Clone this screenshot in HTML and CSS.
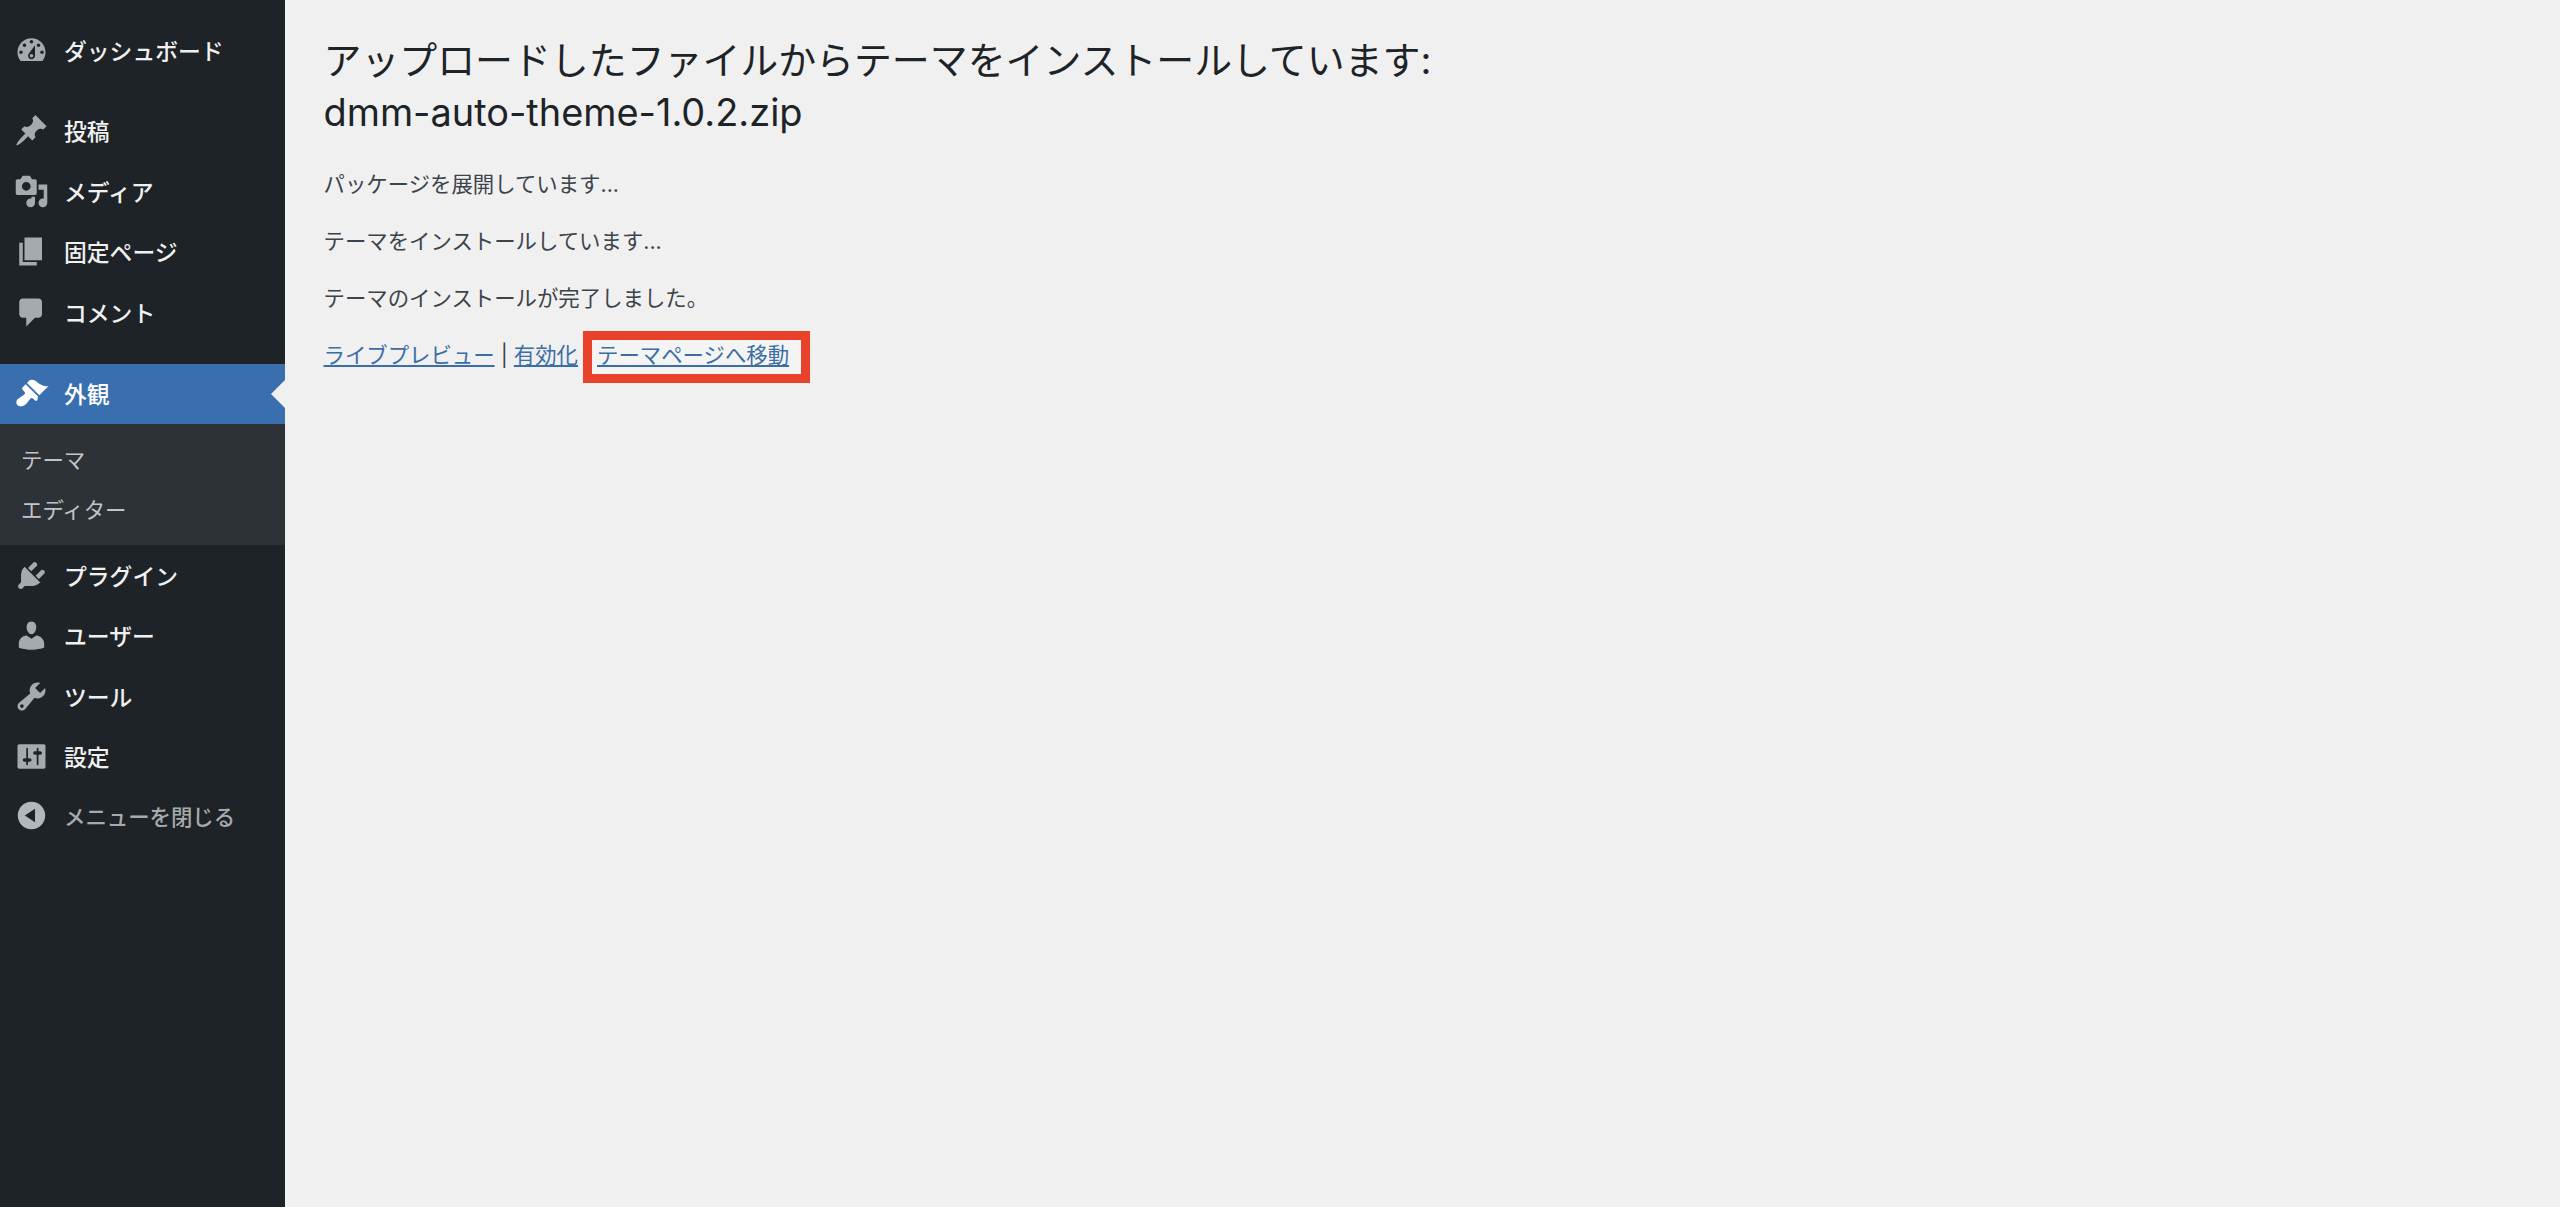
FILE: index.html
```html
<!DOCTYPE html>
<html lang="ja">
<head>
    <meta charset="UTF-8">
    <title>テーマをインストール</title>
    <link rel="stylesheet" href="styles.css">
</head>
<body>
    <nav id="sidebar">
        <ul class="menu menu-top">
            <li class="menu-item">
                <svg class="icon" viewBox="0 0 20 20"><path fill-rule="evenodd" d="M3.76 16h12.48c1.1-1.37 1.76-3.11 1.76-5 0-4.42-3.58-8-8-8s-8 3.58-8 8c0 1.89.66 3.63 1.76 5zM10 4c.55 0 1 .45 1 1s-.45 1-1 1-1-.45-1-1 .45-1 1-1zM6 6c.55 0 1 .45 1 1s-.45 1-1 1-1-.45-1-1 .45-1 1-1zm8 0c.55 0 1 .45 1 1s-.45 1-1 1-1-.45-1-1 .45-1 1-1zm-5.37 5.55L12 7v6c0 1.1-.9 2-2 2s-2-.9-2-2c0-.57.24-1.08.63-1.45zM4 10c.55 0 1 .45 1 1s-.45 1-1 1-1-.45-1-1 .45-1 1-1zm12 0c.55 0 1 .45 1 1s-.45 1-1 1-1-.45-1-1 .45-1 1-1zm-5 3c0-.55-.45-1-1-1s-1 .45-1 1 .45 1 1 1 1-.45 1-1z"/></svg>
                <span>ダッシュボード</span>
            </li>
        </ul>
        <ul class="menu menu-content">
            <li class="menu-item">
                <svg class="icon" viewBox="0 0 20 20"><path d="M10.44 3.02l1.82-1.82 6.36 6.35-1.83 1.82c-1.05-.68-2.48-.57-3.41.36l-.75.75c-.92.93-1.04 2.35-.35 3.41l-1.83 1.82-2.41-2.41-2.8 2.79c-.42.42-3.38 2.71-3.8 2.29s1.86-3.39 2.28-3.81l2.79-2.79L4.1 9.36l1.83-1.82c1.05.69 2.48.57 3.4-.36l.75-.75c.93-.92 1.05-2.35.36-3.41z"/></svg>
                <span>投稿</span>
            </li>
            <li class="menu-item">
                <svg class="icon" viewBox="0 0 20 20"><path fill-rule="evenodd" d="M13 11V4c0-.55-.45-1-1-1h-1.67L9 1H5L3.67 3H2c-.55 0-1 .45-1 1v7c0 .55.45 1 1 1h10c.55 0 1-.45 1-1zM7 4.5c1.38 0 2.5 1.12 2.5 2.5S8.38 9.5 7 9.5 4.5 8.38 4.5 7 5.62 4.5 7 4.5zM14 6h5v10.5c0 1.38-1.12 2.5-2.5 2.5S14 17.88 14 16.5s1.12-2.5 2.5-2.5c.17 0 .34.02.5.05V9h-3V6zm-4 8.05V13h2v3.5c0 1.38-1.12 2.5-2.5 2.5S7 17.88 7 16.5 8.12 14 9.5 14c.17 0 .34.02.5.05z"/></svg>
                <span>メディア</span>
            </li>
            <li class="menu-item">
                <svg class="icon" viewBox="0 0 20 20"><path d="M6 15V2h10v13H6zm-1 1h8v2H3V5h2v11z"/></svg>
                <span>固定ページ</span>
            </li>
            <li class="menu-item">
                <svg class="icon" viewBox="0 0 20 20"><path d="M5 2h9c1.1 0 2 .9 2 2v7c0 1.1-.9 2-2 2h-2l-5 5v-5H5c-1.1 0-2-.9-2-2V4c0-1.1.9-2 2-2z"/></svg>
                <span>コメント</span>
            </li>
        </ul>
        <ul class="menu menu-appearance">
            <li class="menu-item current">
                <svg class="icon" viewBox="0 0 20 20"><path d="M14.48 11.06L7.41 3.99l1.5-1.5c.5-.56 2.3-.47 3.51.32 1.21.8 1.43 1.28 2.91 2.1 1.18.64 2.45 1.26 4.45.85zm-.71.71L6.7 4.7 4.93 6.47c-.39.39-.39 1.02 0 1.41l1.06 1.06c.39.39.39 1.03 0 1.42-.6.6-1.43 1.11-2.21 1.69-.35.26-.7.53-1.01.84C1.43 13.23.78 15.5 2.04 16.76c1.26 1.26 3.53.6 4.87-.74.31-.31.58-.66.84-1.01.58-.78 1.09-1.61 1.69-2.21.39-.39 1.03-.39 1.42 0l1.06 1.06c.39.39 1.02.39 1.41 0z"/></svg>
                <span>外観</span>
            </li>
            <li class="submenu">
                <div class="submenu-item">テーマ</div>
                <div class="submenu-item">エディター</div>
            </li>
            <li class="menu-item">
                <svg class="icon" viewBox="0 0 20 20"><path d="M13.11 4.36L9.87 7.6 8 5.73l3.24-3.24c.35-.34 1.05-.2 1.56.32.52.51.66 1.21.31 1.55zm-8 1.77l.91-1.12 9.01 9.01-1.19.84c-.71.71-2.63 1.16-3.82 1.16H6.14L4.9 17.26c-.59.59-1.54.59-2.12 0-.59-.58-.59-1.53 0-2.12l1.24-1.24v-3.88c0-1.13.4-3.19 1.09-3.89zm7.26 3.97l3.24-3.24c.34-.35 1.04-.21 1.55.31.52.51.66 1.21.31 1.55l-3.24 3.25z"/></svg>
                <span>プラグイン</span>
            </li>
            <li class="menu-item">
                <svg class="icon" viewBox="0 0 20 20"><path d="M10 9.25c-2.27 0-2.73-3.44-2.73-3.44C7 4.02 7.82 2 9.97 2c2.16 0 2.98 2.02 2.71 3.81 0 0-.41 3.44-2.68 3.44zm0 2.57L12.72 10c2.39 0 4.52 2.33 4.52 4.53v2.49s-3.65 1.13-7.24 1.13c-3.65 0-7.24-1.13-7.24-1.13v-2.49c0-2.25 1.94-4.48 4.47-4.48z"/></svg>
                <span>ユーザー</span>
            </li>
            <li class="menu-item">
                <svg class="icon" viewBox="0 0 20 20"><path fill-rule="evenodd" d="M16.68 9.77c-1.34 1.34-3.3 1.67-4.95.99l-5.41 6.52c-.99.99-2.59.99-3.58 0s-.99-2.59 0-3.57l6.52-5.42c-.68-1.65-.35-3.61.99-4.95 1.28-1.28 3.12-1.62 4.72-1.06l-2.89 2.89 2.82 2.82 2.86-2.87c.53 1.58.18 3.39-1.08 4.65zM3.81 16.21c.4.39 1.04.39 1.43 0 .4-.4.4-1.04 0-1.43-.39-.4-1.03-.4-1.43 0-.39.39-.39 1.03 0 1.43z"/></svg>
                <span>ツール</span>
            </li>
            <li class="menu-item">
                <svg class="icon" viewBox="0 0 20 20"><path fill-rule="evenodd" d="M18 16V4c0-.55-.45-1-1-1H3c-.55 0-1 .45-1 1v12c0 .55.45 1 1 1h14c.55 0 1-.45 1-1zM8 11h1c.55 0 1 .45 1 1s-.45 1-1 1H8v1.5c0 .28-.22.5-.5.5s-.5-.22-.5-.5V13H6c-.55 0-1-.45-1-1s.45-1 1-1h1V5.5c0-.28.22-.5.5-.5s.5.22.5.5V11zm5-2h-1c-.55 0-1-.45-1-1s.45-1 1-1h1V5.5c0-.28.22-.5.5-.5s.5.22.5.5V7h1c.55 0 1 .45 1 1s-.45 1-1 1h-1v5.5c0 .28-.22.5-.5.5s-.5-.22-.5-.5V9z"/></svg>
                <span>設定</span>
            </li>
            <li class="menu-item collapse">
                <svg class="icon" viewBox="0 0 20 20"><path fill-rule="evenodd" d="M10 2.16c4.33 0 7.84 3.51 7.84 7.84s-3.51 7.84-7.84 7.84S2.16 14.33 2.16 10 5.71 2.16 10 2.16zm2 11.72V6.12L6.18 9.97z"/></svg>
                <span>メニューを閉じる</span>
            </li>
        </ul>
    </nav>

    <main id="content">
        <h1>アップロードしたファイルからテーマをインストールしています: dmm-auto-theme-1.0.2.zip</h1>
        <p>パッケージを展開しています...</p>
        <p>テーマをインストールしています...</p>
        <p>テーマのインストールが完了しました。</p>
        <p class="actions">
            <a href="#">ライブプレビュー</a> | <a href="#">有効化</a>
            <a href="#" class="highlighted">テーマページへ移動</a>
        </p>
    </main>
</body>
</html>
```

FILE: styles.css
```css
* {
    box-sizing: border-box;
}

html, body {
    height: 100%;
}

body {
    margin: 0;
    display: flex;
    overflow: hidden;
    background-color: #f0f0f1;
    font-family: Inter, "Noto Sans CJK JP", sans-serif;
    font-size: 21.4px;
    color: #3c434a;
}

#sidebar {
    flex: 0 0 285px;
    background-color: #1d2327;
    padding-top: 20px;
}

.menu {
    list-style: none;
    margin: 0;
    padding: 0;
}

.menu-top {
    margin-bottom: 20px;
}

.menu-content {
    margin-bottom: 21px;
}

.menu-item {
    position: relative;
    display: flex;
    align-items: center;
    height: 60.5px;
    padding-left: 14px;
    font-size: 22.8px;
    font-weight: 500;
    color: #f0f0f1;
}

.menu-item span {
    margin-left: 15px;
}

.icon {
    flex: none;
    width: 35px;
    height: 35px;
    fill: #a7aaad;
}

.current {
    background-color: #396eaf;
    color: #fff;
}

.current .icon {
    fill: #fff;
}

.current::after {
    content: "";
    position: absolute;
    right: 0;
    top: 50%;
    margin-top: -14px;
    border: 14px solid transparent;
    border-left-width: 0;
    border-right-color: #f0f0f1;
}

.collapse {
    margin-top: -2px;
    font-size: 21.4px;
    color: #a7aaad;
}

.collapse .icon {
    fill: #b4b7ba;
}

.submenu {
    background-color: #2d3236;
    padding: 11px 0 10px 21px;
    color: #c3c4c7;
}

.submenu-item {
    height: 50px;
    line-height: 50px;
}

#content {
    flex: 1;
    padding: 33.5px 38px 0 38.5px;
}

h1 {
    width: 1150px;
    margin: 0 0 29.5px;
    font-size: 37.9px;
    font-weight: 400;
    line-height: 52px;
    color: #1d2327;
}

p {
    margin: 0 0 23px;
    line-height: 34px;
}

a {
    color: #3b6ea5;
}

.highlighted {
    position: relative;
    margin-left: 13px;
}

/* red annotation box drawn behind the link */
.highlighted::after {
    content: "";
    position: absolute;
    z-index: -1;
    left: -14px;
    right: -21px;
    top: -11px;
    bottom: -15px;
    border: 9px solid #e8432a;
    background-color: #f4f4f4;
}
```
